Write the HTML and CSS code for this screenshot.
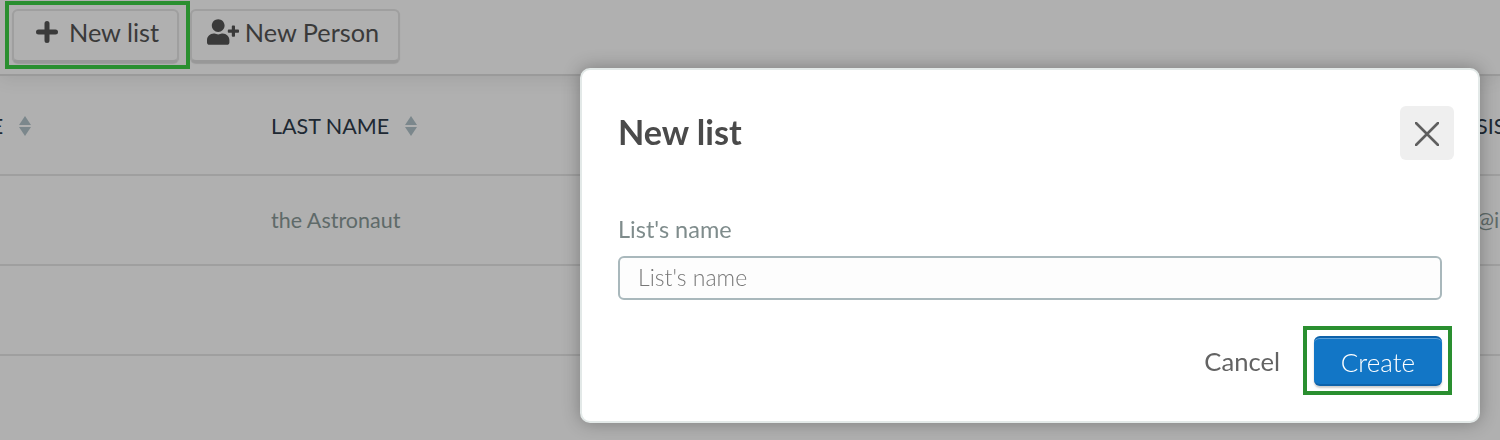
FILE: index.html
```html
<!DOCTYPE html>
<html lang="en">
<head>
  <meta charset="UTF-8" />
  <title>New list</title>
  <link rel="stylesheet" href="styles.css">
</head>
<body>

<div class="toolbar">
  <button class="tool-btn tool-list">
    <svg class="icon-plus" viewBox="0 0 22 22"><path d="M11 2.5v17M2.5 11h17"/></svg>
    New list
  </button>
  <button class="tool-btn tool-person">
    <svg class="icon-person" viewBox="0 0 640 512"><path d="M624 208h-64v-64c0-8.8-7.2-16-16-16h-32c-8.8 0-16 7.2-16 16v64h-64c-8.8 0-16 7.2-16 16v32c0 8.8 7.2 16 16 16h64v64c0 8.8 7.2 16 16 16h32c8.8 0 16-7.2 16-16v-64h64c8.8 0 16-7.2 16-16v-32c0-8.8-7.2-16-16-16zm-400 48c70.7 0 128-57.3 128-128S294.7 0 224 0 96 57.3 96 128s57.3 128 128 128zm89.6 32h-16.7c-22.2 10.2-46.9 16-72.9 16s-50.6-5.8-72.9-16h-16.7C60.2 288 0 348.2 0 422.4V464c0 26.5 21.5 48 48 48h352c26.5 0 48-21.5 48-48v-41.6c0-74.2-60.2-134.4-134.4-134.4z"/></svg>
    New Person
  </button>
</div>

<div class="people">
  <div class="people-row people-head">
    <div class="cell">FIRST NAME <span class="sort"><i class="up"></i><i class="down"></i></span></div>
    <div class="cell">LAST NAME <span class="sort"><i class="up"></i><i class="down"></i></span></div>
    <div class="cell">SIS</div>
  </div>
  <div class="people-row">
    <div class="cell"></div>
    <div class="cell">the Astronaut</div>
    <div class="cell">@i</div>
  </div>
  <div class="people-row">
    <div class="cell"></div>
    <div class="cell"></div>
    <div class="cell"></div>
  </div>
</div>

<div class="overlay"></div>
<div class="mark mark-list"></div>

<div class="modal">
  <div class="modal-top">
    <h2>New list</h2>
    <button class="modal-close">
      <svg viewBox="0 0 24 24"><path d="M1 1l22 22M23 1L1 23"/></svg>
    </button>
  </div>
  <label class="field-label" for="list-name">List's name</label>
  <input class="field-input" id="list-name" placeholder="List's name">
  <div class="modal-actions">
    <button class="btn-cancel">Cancel</button>
    <button class="btn-create">Create</button>
  </div>
</div>

</body>
</html>
```

FILE: styles.css
```css
* {
  box-sizing: border-box;
}

body {
  margin: 0;
  width: 1500px;
  height: 440px;
  overflow: hidden;
  position: relative;
  background: #fff;
  font-family: 'Lato', 'Liberation Sans', sans-serif;
}

button {
  font-family: inherit;
  cursor: pointer;
}

.toolbar {
  display: flex;
  gap: 11px;
  height: 76px;
  padding: 9px 0 0 12px;
  border-bottom: 2px solid #e0e0e0;
  box-shadow: 0 4px 16px rgba(0, 0, 0, 0.08);
}

.tool-btn {
  display: flex;
  align-items: center;
  justify-content: center;
  height: 54px;
  padding: 0 0 7px;
  background: #fff;
  border: 2px solid #e6e6e6;
  border-bottom: 3px solid #dcdcdc;
  border-radius: 6px;
  box-shadow: 0 1px 1px rgba(0, 0, 0, 0.12);
  font-size: 25.3px;
  color: #555;
}

.tool-list {
  width: 167px;
  padding-left: 4px;
  gap: 11px;
}

.tool-person {
  width: 210px;
  padding-right: 4px;
  gap: 6px;
}

.icon-plus {
  width: 22px;
  height: 22px;
  fill: none;
  stroke: #555;
  stroke-width: 5;
  stroke-linecap: round;
}

.icon-person {
  width: 32px;
  height: 26px;
  fill: #555;
}

.people-row {
  display: grid;
  grid-template-columns: 392px 1205px 1fr;
  width: 1621px;
  height: 90px;
  margin-left: -121px;
  border-bottom: 2px solid #e6e6e6;
  align-items: center;
  font-size: 21.5px;
  color: #8a9a98;
}

.people-head {
  height: 99px;
  margin-top: 1px;
  color: #2d3b4a;
}

.people-head .cell {
  display: flex;
  align-items: center;
  gap: 10px;
  white-space: pre;
}

.sort {
  display: flex;
  flex-direction: column;
  gap: 2px;
}

.sort i {
  display: block;
  width: 0;
  height: 0;
  border-left: 6px solid transparent;
  border-right: 6px solid transparent;
}

.sort .up {
  border-bottom: 9px solid #b3c4cb;
}

.sort .down {
  border-top: 9px solid #b3c4cb;
}

.overlay {
  position: absolute;
  inset: 0;
  background: rgba(0, 0, 0, 0.31);
}

.mark {
  position: absolute;
  border: 4px solid #2a8f30;
}

.mark-list {
  left: 5px;
  top: 1px;
  width: 185px;
  height: 68px;
}

.modal {
  position: absolute;
  left: 580px;
  top: 68px;
  width: 900px;
  height: 355px;
  padding: 36px 24px 0 36px;
  background: #fff;
  border: 2px solid #e3e9e8;
  border-radius: 10px;
  box-shadow: 0 0 18px rgba(0, 0, 0, 0.3);
  will-change: transform;
}

.modal-top {
  display: flex;
  justify-content: space-between;
  align-items: center;
  height: 54px;
  margin-bottom: 56px;
  color: #4a4a4a;
}

.modal-top h2 {
  margin: 0 0 4px;
  font-size: 34.2px;
  font-weight: 700;
}

.modal-close {
  display: flex;
  align-items: center;
  justify-content: center;
  width: 54px;
  height: 54px;
  padding: 2px 0 0;
  background: #efefef;
  border: 0;
  border-radius: 6px;
}

.modal-close svg {
  width: 24px;
  height: 24px;
  fill: none;
  stroke: #5f5f5f;
  stroke-width: 2.6;
  stroke-linecap: round;
}

.field-label {
  display: block;
  margin-bottom: 14px;
  font-size: 23.5px;
  line-height: 26px;
  color: #7f8c8c;
}

.field-input {
  display: block;
  width: 824px;
  height: 44px;
  padding: 0 18px 2px;
  background: #fdfdfd;
  border: 2px solid #a9b8bc;
  border-radius: 6px;
  font-family: inherit;
  font-size: 23px;
  font-weight: 300;
  outline: none;
}

.field-input::placeholder {
  color: #777;
  opacity: 1;
}

.modal-actions {
  display: flex;
  justify-content: flex-end;
  align-items: center;
  gap: 34px;
  width: 824px;
  margin-top: 36px;
}

.btn-cancel {
  padding: 0;
  background: none;
  border: 0;
  font-size: 25.6px;
  color: #636363;
}

.btn-create {
  position: relative;
  width: 128px;
  height: 50px;
  padding: 2px 0 0;
  background: #1276c6;
  border: 0;
  border-top: 2px solid #0d62aa;
  border-bottom: 2px solid #0d62aa;
  border-radius: 6px;
  box-shadow: inset 0 1px 0 #5b9fd8, 0 2px 2px rgba(0, 0, 0, 0.2);
  font-size: 26px;
  font-weight: 300;
  color: #fff;
}

.btn-create::after {
  content: "";
  box-sizing: border-box;
  position: absolute;
  left: -11px;
  top: -12px;
  width: 149px;
  height: 69px;
  border: 4px solid #2a8f30;
}
```
